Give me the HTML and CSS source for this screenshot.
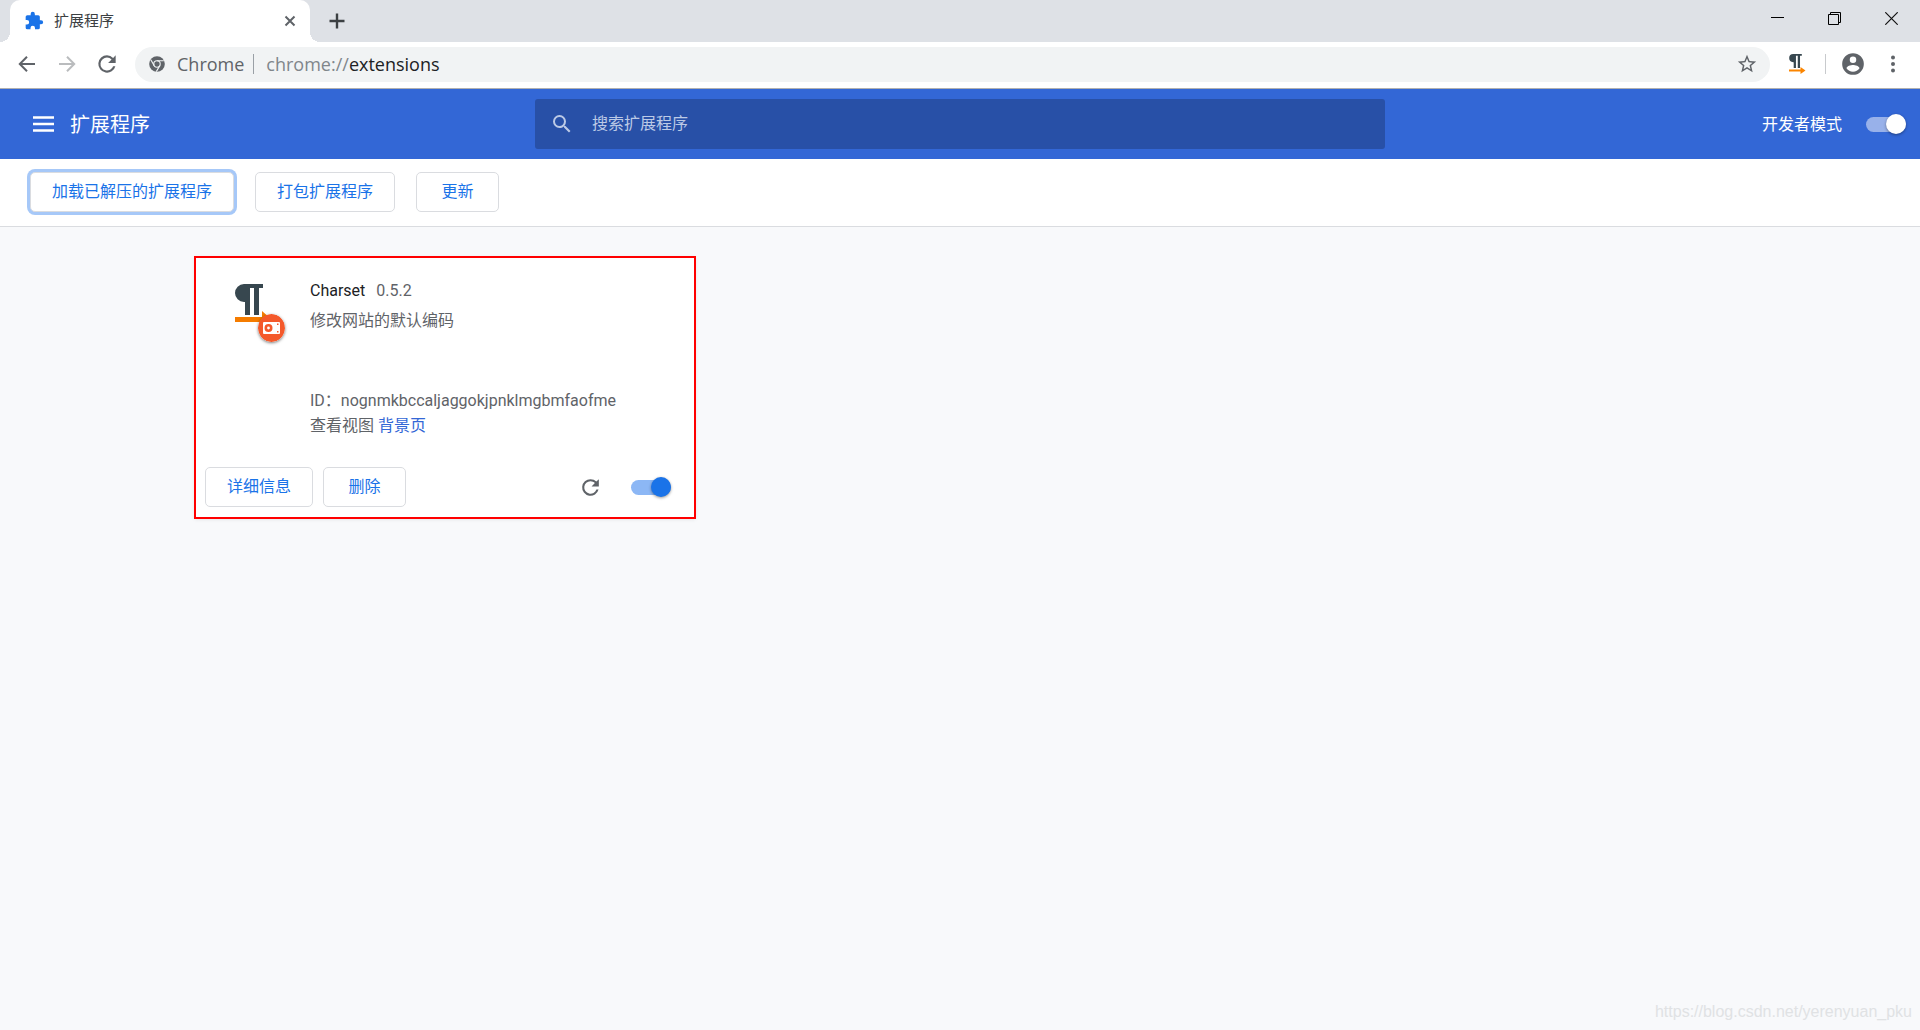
FILE: index.html
```html
<!DOCTYPE html>
<html lang="zh-CN">
<head>
<meta charset="utf-8">
<meta name="viewport" content="width=device-width, initial-scale=1">
<title>扩展程序</title>
<link rel="stylesheet" href="styles.css">
</head>
<body>
<svg class="defs" aria-hidden="true">
  <symbol id="reload" viewBox="0 0 24 24"><path fill="currentColor" d="M17.65 6.35A7.95 7.95 0 0 0 12 4a8 8 0 1 0 7.73 10h-2.08A6 6 0 1 1 12 6c1.66 0 3.14.69 4.22 1.78L13 11h7V4z"/></symbol>
  <symbol id="pilcrow" viewBox="0 0 28 31"><path fill="#37474f" d="M9 0h19v4h-4v27h-5V4h-4v27h-5V18H9A9 9 0 0 1 9 0z"/></symbol>
</svg>

<div class="tabstrip">
  <div class="tab">
    <svg class="tab-icon" viewBox="0 0 24 24" aria-hidden="true"><path fill="#1a73e8" d="M20.5 11H19V7a2 2 0 0 0-2-2h-4V3.500a2.500 2.500 0 0 0-5 0V5H4a2 2 0 0 0-2 2v3.800h1.500a2.700 2.700 0 0 1 0 5.400H2V20a2 2 0 0 0 2 2h3.800v-1.500a2.700 2.700 0 0 1 5.400 0V22H17a2 2 0 0 0 2-2v-4h1.500a2.500 2.500 0 0 0 0-5z"/></svg>
    <span class="tab-title">扩展程序</span>
    <button class="plain" aria-label="关闭标签页"><svg width="12" height="12" viewBox="0 0 12 12"><path d="M1.500 1.500l9 9m0-9l-9 9" stroke="#5f6368" stroke-width="2"/></svg></button>
  </div>
  <button class="plain new-tab" aria-label="新标签页"><svg width="16" height="16" viewBox="0 0 16 16"><path d="M8 .5v15M.5 8h15" stroke="#3c4043" stroke-width="2.400"/></svg></button>
  <div class="window-controls">
    <button class="plain" aria-label="最小化"><svg width="13" height="13" viewBox="0 0 13 13"><path d="M0 5.500h13" stroke="#000"/></svg></button>
    <button class="plain" aria-label="还原"><svg width="13" height="13" viewBox="0 0 13 13"><path d="M.5 2.500h10v10H.5zM2.500 2.500v-2h10v10h-2" fill="none" stroke="#000"/></svg></button>
    <button class="plain" aria-label="关闭"><svg width="13" height="13" viewBox="0 0 13 13"><path d="M.3.3l12.400 12.400m0-12.400L.3 12.700" stroke="#111" stroke-width="1.200"/></svg></button>
  </div>
</div>

<div class="navbar">
  <button class="plain nav" aria-label="后退"><svg width="24" height="24" viewBox="0 0 24 24"><path d="M20 12H5m7-7.200L4.800 12l7.200 7.200" fill="none" stroke="#5f6368" stroke-width="2"/></svg></button>
  <button class="plain nav" aria-label="前进" disabled><svg width="24" height="24" viewBox="0 0 24 24"><path d="M4 12h15m-7-7.200l7.200 7.200-7.200 7.200" fill="none" stroke="#babcbe" stroke-width="2"/></svg></button>
  <button class="plain nav" aria-label="重新加载"><svg width="26" height="26"><use href="#reload"/></svg></button>
  <div class="omnibox">
    <svg class="site-icon" width="16" height="16" viewBox="0 0 16 16" aria-hidden="true"><circle cx="8" cy="8" r="7.800" fill="#5f6368"/><circle cx="8" cy="8" r="3.200" fill="none" stroke="#f1f3f4" stroke-width="1.100"/><path d="M8 4.800h6.800M5.200 9.600L1.800 3.800M10.800 9.600l-3.500 6" stroke="#f1f3f4" stroke-width="1.100"/></svg>
    <span class="site-name">Chrome</span>
    <span class="url"><span class="scheme">chrome://</span>extensions</span>
    <button class="plain star" aria-label="为此页添加书签"><svg width="22" height="22" viewBox="0 0 24 24"><path fill="#5f6368" d="M22 9.240l-7.190-.62L12 2 9.190 8.630 2 9.240l5.460 4.730L5.820 21 12 17.270 18.180 21l-1.630-7.030zM12 15.400l-3.760 2.270 1-4.280-3.320-2.880 4.380-.38L12 6.100l1.710 4.040 4.380.38-3.320 2.880 1 4.280z"/></svg></button>
  </div>
  <button class="plain ext" aria-label="Charset"><svg width="18" height="20" viewBox="0 0 18 20"><use href="#pilcrow" width="13" height="14"/><path fill="#fb8500" d="M0 15.500h11.500V13l5 3.500-5 3.500v-2.500H0z"/></svg></button>
  <button class="plain profile" aria-label="您"><svg width="26" height="26" viewBox="0 0 24 24"><path fill="#5f6368" d="M12 2a10 10 0 1 0 0 20 10 10 0 0 0 0-20zm0 3a3 3 0 1 1 0 6 3 3 0 0 1 0-6zm0 14.200a7.200 7.200 0 0 1-6-3.220c.03-1.990 4-3.080 6-3.080 1.990 0 5.970 1.090 6 3.080a7.200 7.200 0 0 1-6 3.220z"/></svg></button>
  <button class="plain menu" aria-label="自定义及控制"><svg width="4" height="18" viewBox="0 0 4 18"><g fill="#5f6368"><circle cx="2" cy="2.500" r="2"/><circle cx="2" cy="9" r="2"/><circle cx="2" cy="15.500" r="2"/></g></svg></button>
</div>

<header class="header">
  <div class="brand">
    <button class="plain" aria-label="主菜单"><svg width="21" height="16" viewBox="0 0 21 16"><path d="M0 1.500h21M0 8h21M0 14.500h21" stroke="#fff" stroke-width="2.500"/></svg></button>
    <h1>扩展程序</h1>
  </div>
  <label class="search">
    <svg width="24" height="24" viewBox="0 0 24 24" aria-hidden="true"><path fill="#bccae6" d="M15.500 14h-.79l-.28-.27A6.470 6.470 0 0 0 16 9.500 6.500 6.500 0 1 0 9.500 16c1.610 0 3.090-.59 4.230-1.570l.27.28v.79l5 4.990L20.490 19zm-6 0a4.500 4.500 0 1 1 0-9 4.500 4.500 0 0 1 0 9z"/></svg>
    <input type="search" placeholder="搜索扩展程序" aria-label="搜索扩展程序">
  </label>
  <label class="dev-mode"><span>开发者模式</span><input class="switch light" type="checkbox" role="switch" checked></label>
</header>

<div class="actions">
  <button class="btn focused">加载已解压的扩展程序</button>
  <button class="btn">打包扩展程序</button>
  <button class="btn">更新</button>
</div>

<main class="content">
  <article class="card">
    <div class="card-main">
      <div class="card-icon">
        <svg width="54" height="62" viewBox="0 0 54 62" aria-hidden="true"><use href="#pilcrow" width="28" height="31"/><path fill="#f57c00" d="M0 33h27v-6l9 8-9 3H0z"/></svg>
        <svg class="badge" width="27" height="28" viewBox="0 0 27 28" role="img" aria-label="已解压"><ellipse cx="13.500" cy="14" rx="13.500" ry="14" fill="#f4592b"/><rect x="5" y="8" width="17" height="12" rx="1" fill="#fff"/><circle cx="10.500" cy="14" r="2.700" fill="none" stroke="#f4592b" stroke-width="2.600"/><path d="M19 9.500h1.500V11H19zM19 17h1.500v1.500H19z" fill="#f4592b"/></svg>
      </div>
      <div class="info">
        <h2>Charset <span>0.5.2</span></h2>
        <p class="description">修改网站的默认编码</p>
        <p>ID：nognmkbccaljaggokjpnklmgbmfaofme</p>
        <p>查看视图 <a href="#background">背景页</a></p>
      </div>
    </div>
    <div class="card-actions">
      <button class="btn">详细信息</button>
      <button class="btn">删除</button>
      <button class="plain card-reload" aria-label="重新加载"><svg width="25" height="25"><use href="#reload"/></svg></button>
      <input class="switch" type="checkbox" role="switch" aria-label="启用" checked>
    </div>
  </article>
</main>
<footer class="watermark">https://blog.csdn.net/yerenyuan_pku</footer>
</body>
</html>
```
FILE: styles.css
```css
* { box-sizing: border-box; }

body {
  margin: 0;
  min-height: 100vh;
  display: flex;
  flex-direction: column;
  background: #f8f9fb;
  color: #5f6368;
  font: 16px/24px Roboto, "Noto Sans CJK SC", sans-serif;
}

h1, h2, p { margin: 0; font-weight: 400; }
svg { display: block; flex: none; }
.defs { position: absolute; width: 0; height: 0; }

button { font: inherit; cursor: pointer; }
.plain {
  display: flex;
  align-items: center;
  justify-content: center;
  padding: 0;
  border: 0;
  background: none;
  color: #5f6368;
}

/* Tab strip */
.tabstrip {
  display: flex;
  align-items: stretch;
  height: 42px;
  padding-left: 10px;
  background: #dee1e6;
}
.tab {
  position: relative;
  display: flex;
  align-items: center;
  width: 300px;
  padding: 0 14px;
  border-radius: 10px 10px 0 0;
  background: #fff;
}
.tab::before, .tab::after {
  content: "";
  position: absolute;
  bottom: 0;
  width: 10px;
  height: 10px;
}
.tab::before { right: 100%; background: radial-gradient(circle at 0 0, transparent 10px, #fff 10px); }
.tab::after { left: 100%; background: radial-gradient(circle at 100% 0, transparent 10px, #fff 10px); }
.tab-icon { width: 20px; height: 20px; }
.tab-title {
  flex: 1;
  padding-left: 10px;
  color: #3c4043;
  font-size: 15px;
}
.new-tab { width: 54px; }
.window-controls { display: flex; margin-left: auto; }
.window-controls .plain { width: 57px; padding-bottom: 6px; }

/* Address bar */
.navbar {
  display: flex;
  align-items: center;
  height: 47px;
  padding: 0 14px 2px 7px;
  border-bottom: 1px solid #b0b0b0;
  background: #fff;
}
.nav { width: 40px; height: 40px; }
.omnibox {
  flex: 1;
  display: flex;
  align-items: center;
  height: 35px;
  margin-left: 8px;
  padding: 0 12px 0 14px;
  border-radius: 18px;
  background: #f1f3f4;
  font: 18px/20px "Open Sans", sans-serif;
}
.site-name {
  margin-left: 12px;
  padding-right: 9px;
  border-right: 1px solid #9aa0a6;
}
.url { margin-left: 12px; color: #202124; }
.scheme { color: #80868b; }
.star { margin-left: auto; }
.ext { width: 56px; height: 20px; border-right: 1px solid #c8cacd; }
.profile { width: 54px; }
.menu { width: 26px; }

/* Page header */
.header {
  display: grid;
  grid-template-columns: 1fr minmax(300px, 850px) 1fr;
  align-items: center;
  height: 70px;
  padding: 0 14px;
  background: #3367d6;
  color: #fff;
}
.brand { display: flex; align-items: center; gap: 16px; padding-left: 19px; }
h1 { padding-top: 2px; font-size: 20px; }
.search {
  display: flex;
  align-items: center;
  gap: 18px;
  height: 50px;
  padding: 0 15px;
  border-radius: 3px;
  background: #2850a7;
}
.search input {
  flex: 1;
  padding: 0;
  border: 0;
  outline: 0;
  background: none;
  color: #fff;
  font: inherit;
}
.search input::placeholder { color: #bccae6; opacity: 1; }
.dev-mode { display: flex; align-items: center; justify-content: flex-end; gap: 24px; }
.dev-mode span { padding-top: 2px; }

.switch {
  appearance: none;
  position: relative;
  width: 40px;
  height: 15px;
  margin: 0;
  border-radius: 8px;
  background: #8cb7f5;
  color: #1a73e8;
}
.switch::before {
  content: "";
  position: absolute;
  top: -3px;
  right: 0;
  width: 20px;
  height: 20px;
  border-radius: 50%;
  background: currentColor;
  box-shadow: 0 1px 3px rgba(0, 0, 0, .4);
}
.switch.light { background: #98b1ea; color: #fff; }

/* Developer actions */
.actions {
  display: flex;
  align-items: center;
  gap: 21px;
  height: 68px;
  padding: 0 30px 1px;
  border-bottom: 1px solid #dadce0;
  background: #fff;
}
.btn {
  height: 40px;
  min-width: 83px;
  padding: 0 21px;
  border: 1px solid #dadce0;
  border-radius: 5px;
  background: #fff;
  color: #1a73e8;
}
.focused { box-shadow: 0 0 0 3px #a6c8f8; }

/* Extension list */
.content {
  flex: 1;
  display: grid;
  grid-template-columns: repeat(auto-fill, 500px);
  gap: 15px;
  justify-content: center;
  align-content: start;
  padding: 30px 0;
}
.card {
  padding: 21px 10px 11px;
  outline: 2px solid #f00;
  outline-offset: -1px;
  background: #fff;
  box-shadow: 0 1px 4px rgba(60, 64, 67, .15);
}
.card-main { display: flex; gap: 21px; padding-left: 30px; }
.card-icon { position: relative; width: 54px; padding-top: 6px; }
.badge {
  position: absolute;
  left: 23px;
  top: 36px;
  border-radius: 50%;
  box-shadow: 0 1px 3px rgba(0, 0, 0, .5);
}
.info { flex: 1; line-height: 25px; }
h2 { padding-bottom: 5px; color: #202124; font-size: 16px; }
h2 span { margin-left: 7px; color: #5f6368; }
.description { height: 80px; }
.info a { color: #3367d6; text-decoration: none; }
.card-actions { display: flex; align-items: center; gap: 10px; margin-top: 29px; }
.card-reload { margin-left: auto; margin-right: 18px; }
.card-actions .switch { margin-right: 14px; }

.watermark {
  padding: 0 8px 6px;
  color: #e0e2e4;
  font-family: "Liberation Sans", Arial, sans-serif;
  text-align: right;
}
```
